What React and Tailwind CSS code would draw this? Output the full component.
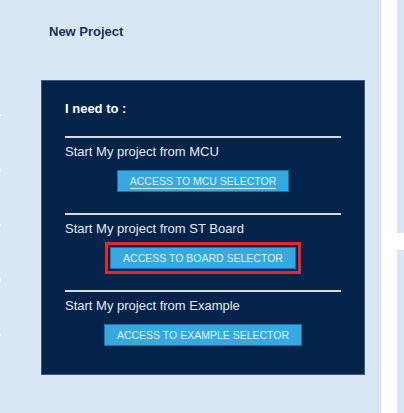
import React from "react";

const sections = [
  { label: "Start My project from MCU", button: "ACCESS TO MCU SELECTOR", underline: true },
  { label: "Start My project from ST Board", button: "ACCESS TO BOARD SELECTOR", selected: true },
  { label: "Start My project from Example", button: "ACCESS TO EXAMPLE SELECTOR" },
];

const App = () => {
  return (
    <div className="flex h-[413px] w-[404px] overflow-hidden bg-white font-['Liberation_Sans',Arial,sans-serif]">
      <div className="relative w-[381px] shrink-0 bg-[#d9e7f5] pl-[41px]">
        {/* little ticks on the left edge */}
        <div className="absolute left-0 top-[114px] flex flex-col gap-[53px]">
          {[0, 1, 2, 3, 4].map((i) => (
            <div key={i} className="h-[2px] w-[1px] bg-white"></div>
          ))}
        </div>

        <h2 className="ml-[8px] pt-[25px] text-[13px] font-bold leading-[14px] text-[#1b2f57]">
          New Project
        </h2>

        <div className="mt-[41px] w-[324px] border border-[#3b5b86] bg-[#03234b] px-[23px] pb-[28px] pt-[21px]">
          <div className="text-[13px] font-bold leading-[14px] text-white">I need to :</div>

          {sections.map((s, i) => (
            <div key={s.label} className={i === 0 ? "mt-[20px]" : "mt-[21px]"}>
              <div className="h-[2px] bg-[#d6d9de]"></div>
              <div className="mt-[7px] text-[13px] leading-[14px] text-[#e6eaf0]">{s.label}</div>
              <div className="mt-[11px] flex justify-center">
                <button
                  className={`h-[22px] border border-[#1d72ad] bg-[#38a9de] px-[12px] text-[10.5px] leading-[20px] text-[#dff1fb] ${
                    s.selected ? "outline-[3px] outline-offset-[2px] outline-solid outline-[#e8262b]" : ""
                  }`}
                >
                  <span className={s.underline ? "border-b border-[#cfe9f7] pb-[1px]" : ""}>{s.button}</span>
                </button>
              </div>
            </div>
          ))}
        </div>
      </div>

      <div className="w-[16px] shrink-0 bg-white"></div>

      <div className="flex flex-1 flex-col">
        <div className="h-[233px] bg-[#d9e7f5]"></div>
        <div className="h-[17px] bg-white"></div>
        <div className="flex-1 bg-[#d9e7f5]"></div>
      </div>
    </div>
  );
};

export default App;
